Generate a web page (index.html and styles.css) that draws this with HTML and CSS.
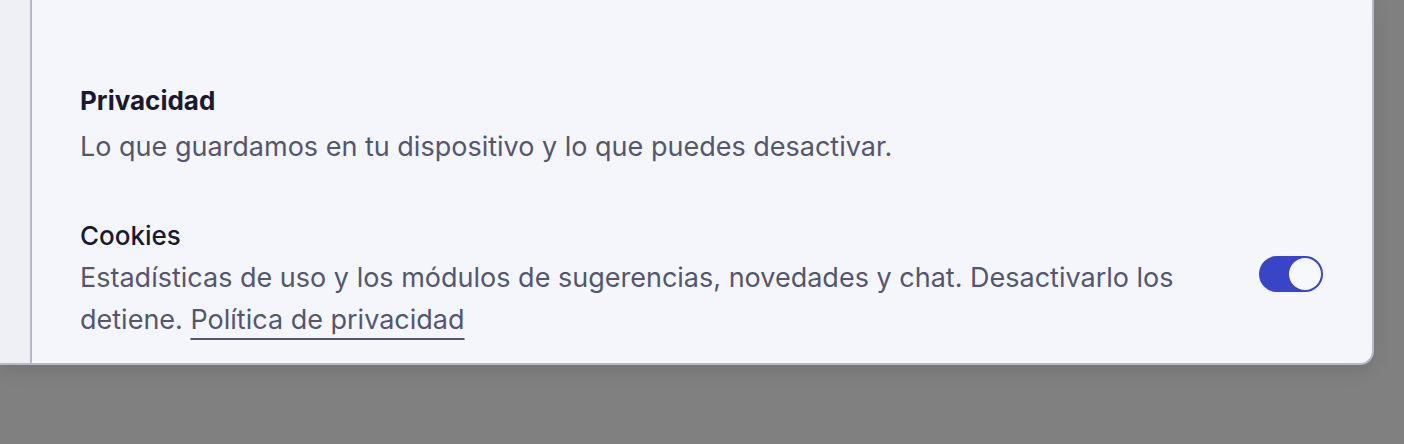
FILE: index.html
```html
<!DOCTYPE html>
<html lang="es">
<head>
<meta charset="utf-8">
<title>Privacidad</title>
<link rel="stylesheet" href="styles.css">
</head>
<body>
<div class="dialog">
  <aside class="sidebar"></aside>
  <main class="content">
    <section class="section">
      <h2 class="section-title">Privacidad</h2>
      <p class="section-desc">Lo que guardamos en tu dispositivo y lo que puedes desactivar.</p>
    </section>
    <div class="setting-row">
      <div class="setting-text">
        <div class="setting-label">Cookies</div>
        <p class="setting-desc">Estadísticas de uso y los módulos de sugerencias, novedades y chat. Desactivarlo los detiene. <a class="link" href="#">Política de privacidad</a></p>
      </div>
      <button class="toggle is-on" type="button" aria-pressed="true" aria-label="Cookies"><span class="knob"></span></button>
    </div>
  </main>
</div>
</body>
</html>
```
FILE: styles.css
```css
html, body {
  margin: 0;
  padding: 0;
}
body {
  background: #808080;
  width: 1404px;
  height: 444px;
  overflow: hidden;
  font-family: Inter, "Liberation Sans", sans-serif;
}
.dialog {
  display: flex;
  width: 1372px;
  height: 363px;
  background: #f5f6fb;
  border-right: 2px solid #b7b8cc;
  border-bottom: 2px solid #b7b8cc;
  border-bottom-right-radius: 14px;
  box-shadow: 0 6px 18px rgba(0, 0, 0, 0.10);
  overflow: hidden;
}
.sidebar {
  width: 30px;
  flex: none;
  background: #eef0f6;
  border-right: 2px solid #b7b8cc;
}
.content {
  flex: 1;
  padding: 80px 49px 0 48px;
}
.section-title {
  margin: 0;
  font-size: 26px;
  line-height: 42px;
  font-weight: 700;
  color: #191a2f;
}
.section-desc {
  margin: 4px 0 0;
  font-size: 27px;
  line-height: 42px;
  color: #54566f;
}
.setting-row {
  display: flex;
  align-items: flex-start;
  gap: 60px;
  margin-top: 46px;
}
.setting-text {
  flex: 1;
}
.setting-label {
  font-size: 26px;
  line-height: 43px;
  font-weight: 500;
  color: #191a2f;
}
.setting-desc {
  margin: 0;
  font-size: 27px;
  line-height: 42px;
  color: #54566f;
}
.link {
  color: #54566f;
  text-decoration: underline;
  text-decoration-thickness: 2px;
  text-underline-offset: 9px;
}
.toggle {
  flex: none;
  position: relative;
  width: 64px;
  height: 36px;
  margin-top: 42px;
  padding: 0;
  border: 2px solid #3a44c6;
  border-radius: 18px;
  background: #3a44c6;
  cursor: pointer;
}
.knob {
  position: absolute;
  top: 0;
  right: 0;
  width: 32px;
  height: 32px;
  border-radius: 50%;
  background: #f7f8fc;
}
```
